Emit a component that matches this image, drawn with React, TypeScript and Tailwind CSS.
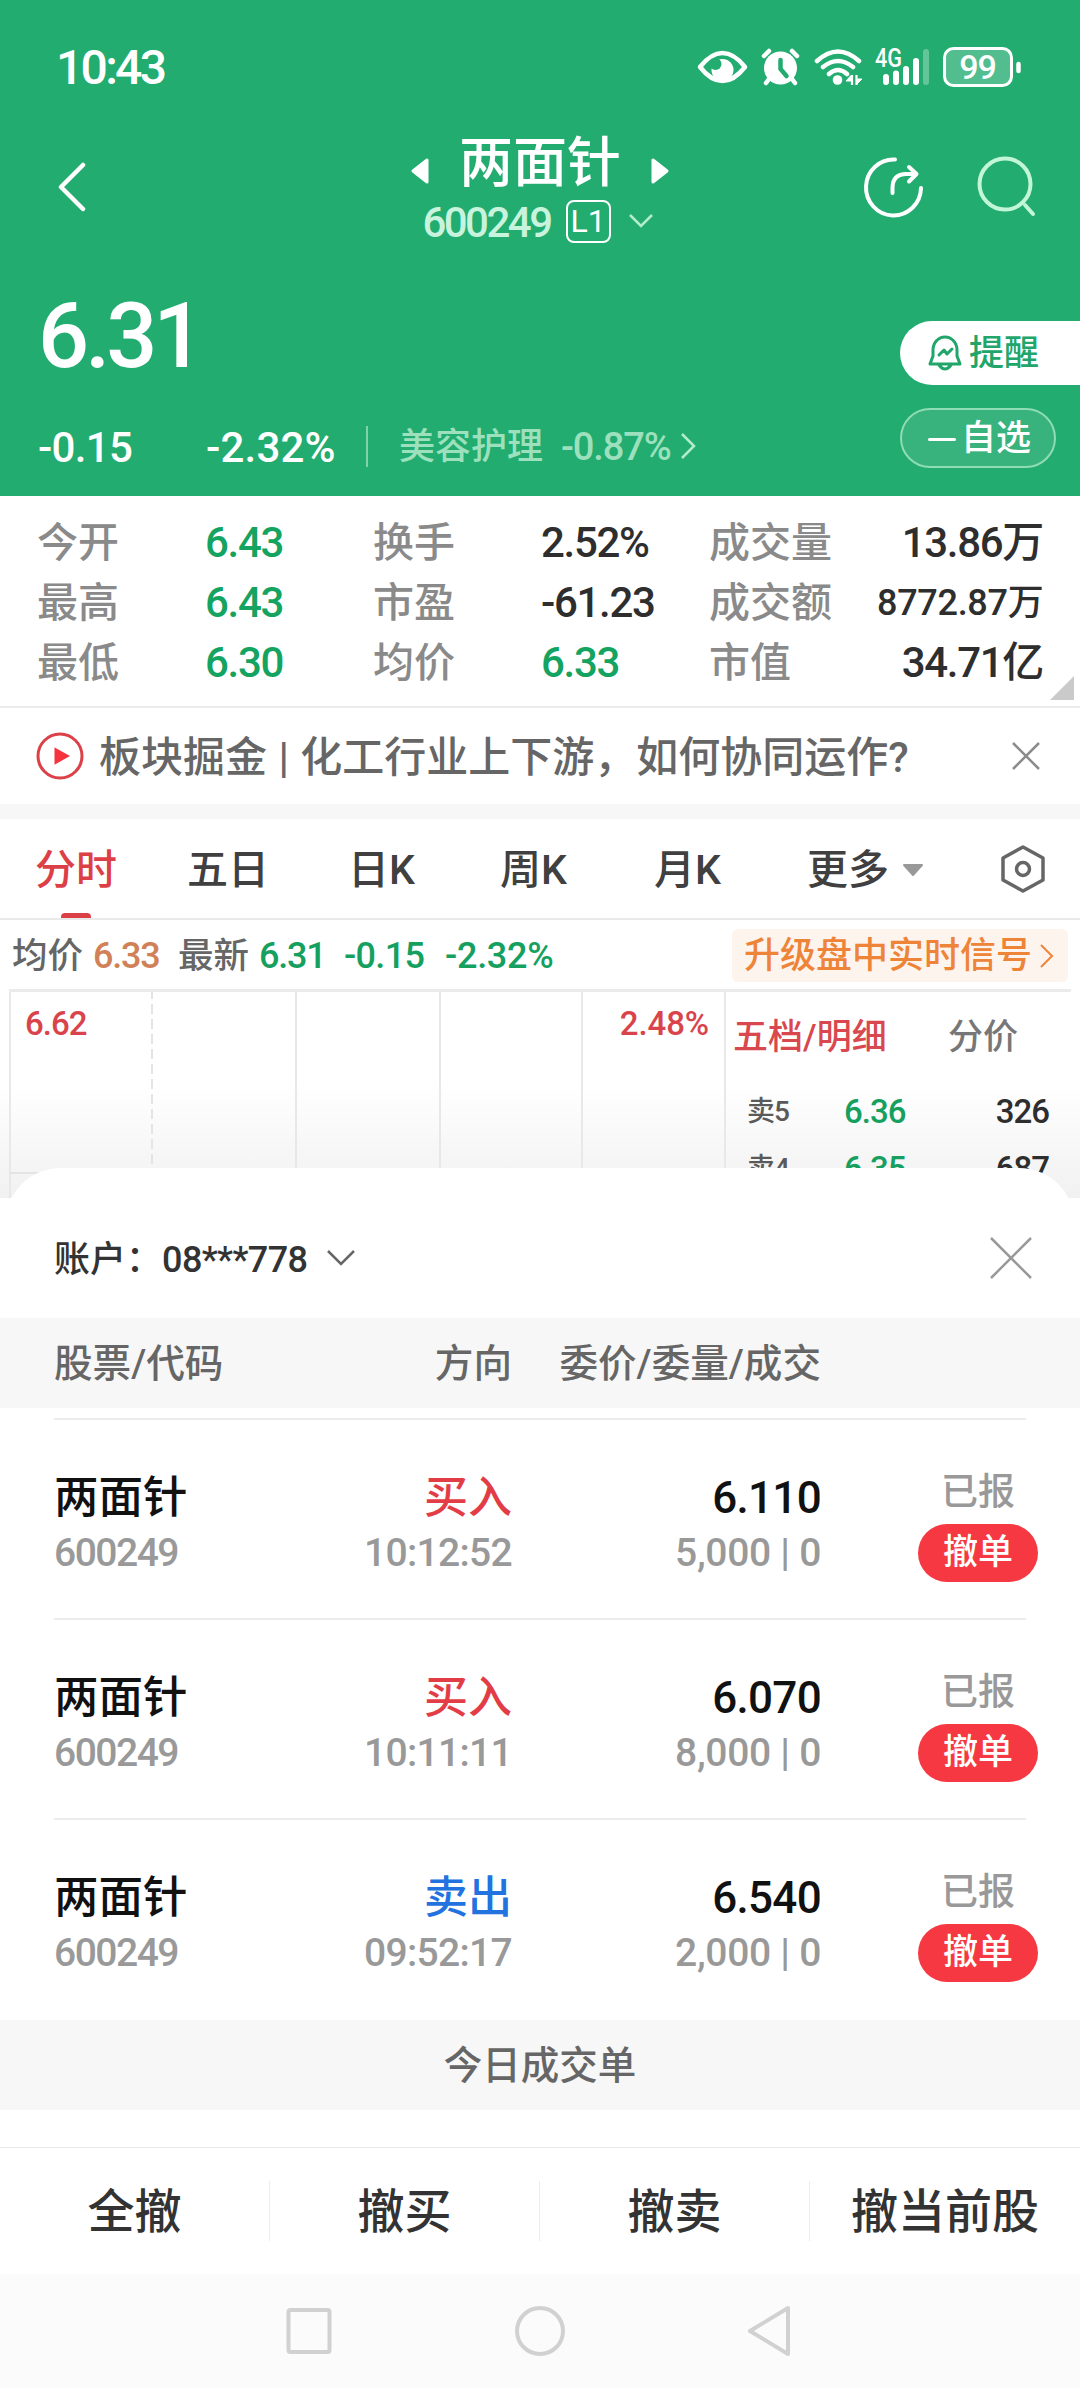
import React from 'react';

interface Stat {
  label: string;
  value: string;
  green?: boolean;
  small?: boolean;
}

interface Order {
  name: string;
  code: string;
  side: 'buy' | 'sell';
  time: string;
  price: string;
  amount: string;
}

const stats: Stat[][] = [
  [
    { label: '今开', value: '6.43', green: true },
    { label: '换手', value: '2.52%' },
    { label: '成交量', value: '13.86万' },
  ],
  [
    { label: '最高', value: '6.43', green: true },
    { label: '市盈', value: '-61.23' },
    { label: '成交额', value: '8772.87万', small: true },
  ],
  [
    { label: '最低', value: '6.30', green: true },
    { label: '均价', value: '6.33', green: true },
    { label: '市值', value: '34.71亿' },
  ],
];

const orders: Order[] = [
  { name: '两面针', code: '600249', side: 'buy', time: '10:12:52', price: '6.110', amount: '5,000 | 0' },
  { name: '两面针', code: '600249', side: 'buy', time: '10:11:11', price: '6.070', amount: '8,000 | 0' },
  { name: '两面针', code: '600249', side: 'sell', time: '09:52:17', price: '6.540', amount: '2,000 | 0' },
];

const StatusBar: React.FC = () => (
  <div className="flex h-[134px] items-center pl-[56px] pr-[58px]">
    <span className="pt-[2px] text-[48px] leading-[48px] tracking-[-2.700px]">10:43</span>
    <svg className="ml-auto h-[48px] w-[326px]" viewBox="696 43 326 48" fill="none" stroke="#fff">
      {/* eye */}
      <path d="M700 67Q711 53 722.500 53Q734 53 745 67Q734 81 722.500 81Q711 81 700 67Z" strokeWidth="4.500" strokeLinejoin="round" />
      <circle cx="722.500" cy="70" r="11" fill="#fff" stroke="none" />
      <circle cx="715.500" cy="64" r="6" fill="#22ac70" stroke="none" />
      {/* alarm */}
      <g strokeLinecap="round">
        <circle cx="780.500" cy="68" r="16.500" fill="#fff" stroke="none" />
        <path d="M764 56l5-5M792 51l5 5M769 79l-3 4M792 79l3 4" strokeWidth="4.500" />
        <path d="M780.500 60v9l6 7" stroke="#22ac70" strokeWidth="4.500" />
      </g>
      {/* wifi */}
      <g strokeLinecap="round" strokeWidth="4.500">
        <path d="M817 61q21-19 42 0M823 67q15-12 30 0M829 74q9-8 18 0" />
        <circle cx="837.500" cy="80" r="4.800" fill="#fff" stroke="none" />
      </g>
      <path d="M852 75v10M856.500 75v10" strokeWidth="2.200" />
      <path d="M846 81l5-5.500v5.500zM862 79l-5 5v-5z" fill="#fff" strokeWidth="1" />
      {/* signal */}
      <text x="875" y="67" fill="#fff" stroke="none" fontSize="25" textLength="27" lengthAdjust="spacingAndGlyphs">4G</text>
      <g strokeLinecap="round" strokeWidth="6">
        <path d="M886 77v5M896 73.500v8.500M906 69v13M916 61v21" />
        <path d="M926 52v30" opacity=".3" />
      </g>
      {/* battery */}
      <rect x="944.500" y="48.500" width="67" height="37" rx="9" fill="#ffffff38" strokeWidth="3" />
      <path d="M1018.500 64v7" strokeWidth="4.500" strokeLinecap="round" />
      <text x="977.500" y="79" fill="#fff" stroke="none" fontSize="34" textAnchor="middle" letterSpacing="-1">99</text>
    </svg>
  </div>
);

const TitleBar: React.FC = () => (
  <div className="flex h-[122px] justify-between pl-[56px] pr-[44px]">
    <svg className="mt-[28px] h-[50px] w-[32px]" viewBox="0 0 32 50" fill="none" stroke="#fff" strokeWidth="4.500" strokeLinecap="round" strokeLinejoin="round">
      <path d="M27 3L5 25L27 47" />
    </svg>
    <div className="ml-[130px] flex w-[262px] flex-col items-center">
      <div className="flex h-[60px] items-center">
        <svg className="mt-[13px] h-[28px] w-[20px]" viewBox="0 0 20 28" fill="#fff" stroke="#fff" strokeWidth="3" strokeLinejoin="round">
          <path d="M3 14L17 3V25Z" />
        </svg>
        <h1 className="mx-[29px] text-[54px] leading-[60px]">两面针</h1>
        <svg className="mt-[13px] h-[28px] w-[20px]" viewBox="0 0 20 28" fill="#fff" stroke="#fff" strokeWidth="3" strokeLinejoin="round">
          <path d="M17 14L3 3V25Z" />
        </svg>
      </div>
      <div className="mt-[5px] flex h-[44px] items-center pr-[4px]">
        <span className="pt-[3px] text-[42px] leading-[44px] tracking-[-2.500px] text-[#c8f3dc]">600249</span>
        <span className="ml-[15px] flex h-[43px] w-[45px] items-center justify-center rounded-[8px] border-2 border-white text-[32px] font-normal leading-[38px]">L1</span>
        <svg className="ml-[17px] h-[16px] w-[26px]" viewBox="0 0 26 16" fill="none" stroke="#b5ebce" strokeWidth="2.500">
          <path d="M2 2L13 13L24 2" />
        </svg>
      </div>
    </div>
    <svg className="mt-[19px] h-[66px] w-[174px]" viewBox="862 154 174 66" fill="none" strokeWidth="4" strokeLinecap="round">
      <g stroke="#fff">
        <path d="M895 160.500A27.500 28 0 1 0 921 189" />
        <path d="M892.500 194v-5q0-14 14-14h10M909 168l7.500 7l-7.500 7.500" strokeLinejoin="round" />
      </g>
      <g stroke="#c3f5d9">
        <circle cx="1005" cy="185" r="25.500" />
        <path d="M1025 206l8 9" />
      </g>
    </svg>
  </div>
);

const Quote: React.FC = () => (
  <div className="flex h-[240px] justify-between pl-[38px]">
    <div>
      <div className="mt-[35px] text-[90px] leading-[92px] tracking-[-4px]">6.31</div>
      <div className="mt-[41px] flex h-[44px] items-center">
        <span className="w-[168px] pt-[3px] text-[42px] leading-[44px] tracking-[-0.700px]">-0.15</span>
        <span className="w-[160px] pt-[3px] text-[42px] leading-[44px] tracking-[0.200px]">-2.32%</span>
        <i className="h-[41px] w-[2px] bg-[#7fd3a8]" />
        <span className="ml-[31px] pt-[1px] text-[36px] leading-[44px] text-[#9ce0bd]">美容护理</span>
        <span className="ml-[18px] pt-[2px] text-[38px] leading-[44px] tracking-[-1.100px] text-[#9ce0bd]">-0.87%</span>
        <svg className="ml-[9px] h-[28px] w-[16px]" viewBox="0 0 16 28" fill="none" stroke="#b5ebce" strokeWidth="2.500">
          <path d="M2 2L14 14L2 26" />
        </svg>
      </div>
    </div>
    <div className="w-[180px] pt-[65px]">
      <div className="flex h-[64px] items-center rounded-l-full bg-white pl-[28px] text-[#22a56b]">
        <svg className="h-[36px] w-[34px]" viewBox="0 0 34 36" fill="none" stroke="currentColor" strokeWidth="3" strokeLinecap="round" strokeLinejoin="round">
          <path d="M5 21V15a12 13 0 0 1 24 0v6l3 8H2zM11 30q6 8 12 0" />
          <path d="M11 20l5-5l3 4l5-5" />
        </svg>
        <span className="ml-[7px] pt-[2px] text-[35px] leading-[50px]">提醒</span>
      </div>
      <div className="mt-[23px] flex h-[60px] w-[156px] items-center rounded-full border-2 border-[#8fdcb5] bg-[#38b37e] pl-[26px]">
        <i className="mt-[2px] h-[3px] w-[28px] rounded bg-white" />
        <span className="ml-[5px] pt-[1px] text-[35px] leading-[50px]">自选</span>
      </div>
    </div>
  </div>
);

const StatGrid: React.FC = () => (
  <div className="relative h-[212px] border-b-2 border-[#ebebeb] pl-[37px] pt-[17px]">
    {stats.map((row, i) => (
      <div key={i} className="grid h-[60px] w-[1006px] grid-cols-[336px_336px_334px] text-[42px] leading-[60px]">
        {row.map((item, col) => (
          <div key={item.label} className="flex">
            <span className="w-[168px] shrink-0 text-[41px] text-[#8a8a8a]">{item.label}</span>
            <span
              className={`whitespace-nowrap ${item.green ? 'text-[#14a360]' : 'text-[#2e2e2e]'} ${
                item.small ? 'text-[36px] tracking-[-0.300px]' : 'tracking-[-1.300px]'
              } ${col === 2 ? 'ml-auto' : ''}`}
            >
              {item.value}
            </span>
          </div>
        ))}
      </div>
    ))}
    <svg className="absolute bottom-[6px] right-[6px] h-[24px] w-[24px]" viewBox="0 0 24 24" fill="#cacaca">
      <path d="M24 0V24H0Z" />
    </svg>
  </div>
);

const NewsBar: React.FC = () => (
  <div className="flex h-[111px] items-center border-b-[15px] border-[#f7f7f7] pl-[36px] pr-[40px]">
    <svg className="h-[48px] w-[48px]" viewBox="0 0 48 48" fill="none" stroke="#dc4149" strokeWidth="3">
      <circle cx="24" cy="24" r="22" />
      <path d="M19.500 17L32 24L19.500 31Z" fill="#f5343f" stroke="#f5343f" strokeWidth="2" />
    </svg>
    <span className="ml-[15px] pt-[4px] text-[42px] leading-[60px] [word-spacing:1px] text-[#666]">板块掘金 | 化工行业上下游，如何协同运作?</span>
    <svg className="ml-auto h-[28px] w-[28px]" viewBox="0 0 28 28" stroke="#8c8c8c" strokeWidth="2.500">
      <path d="M1 1L27 27M27 1L1 27" />
    </svg>
  </div>
);

const Tabs: React.FC = () => (
  <div className="flex h-[101px] items-center border-b-2 border-[#e9e9e9] pl-[35px] pr-[34px] pt-[3px] text-[41px] leading-[60px] text-[#404040]">
    <div className="relative flex h-full w-[152px] items-center text-[#dd3f47]">
      分时
      <i className="absolute bottom-0 left-[26px] h-[5px] w-[30px] rounded-t bg-[#dd3f47]" />
    </div>
    <span className="w-[161px]">五日</span>
    <span className="w-[152px]">日K</span>
    <span className="w-[154px]">周K</span>
    <span className="w-[153px]">月K</span>
    <span>更多</span>
    <svg className="ml-[13px] h-[14px] w-[22px]" viewBox="0 0 22 14" fill="#999" stroke="#999" strokeWidth="2" strokeLinejoin="round">
      <path d="M2 2H20L11 12Z" />
    </svg>
    <svg className="-mt-[3px] ml-auto h-[48px] w-[46px]" viewBox="0 0 46 48" fill="none" stroke="#666" strokeWidth="3.500" strokeLinejoin="round">
      <path d="M23 2L43 13V35L23 46L3 35V13Z" />
      <circle cx="23" cy="24" r="6.500" />
    </svg>
  </div>
);

const PriceLine: React.FC = () => (
  <div className="flex h-[69px] items-center pl-[12px] pr-[12px] pt-[2px] text-[36px] leading-[50px] text-[#16a05f]">
    <span className="text-[35.500px] text-[#666]">均价</span>
    <span className="ml-[10px] w-[85px] tracking-[-1.200px] text-[#d08157]">6.33</span>
    <span className="text-[35.500px] text-[#666]">最新</span>
    <span className="ml-[10px] w-[85px] tracking-[-1.200px]">6.31</span>
    <span className="w-[101px] tracking-[-0.700px]">-0.15</span>
    <span className="tracking-[-0.300px]">-2.32%</span>
    <div className="ml-auto flex h-[53px] w-[336px] items-center rounded-[6px] bg-[#fef4ee] pl-[12px] text-[#ee8437]">
      升级盘中实时信号
      <svg className="ml-[8px] h-[24px] w-[14px]" viewBox="0 0 14 24" fill="none" stroke="#ee8437" strokeWidth="2">
        <path d="M1 1L12 12L1 23" />
      </svg>
    </div>
  </div>
);

const asks = [
  { label: '卖5', price: '6.36', count: '326' },
  { label: '卖4', price: '6.35', count: '687' },
];

const Chart: React.FC = () => (
  <div className="relative h-[209px] overflow-hidden bg-linear-to-b from-white from-45% to-[#f1f1f1]">
    <div className="ml-[9px] mr-[9px] flex h-[209px] border-t-[3px] border-[#ebebeb]">
      <div className="flex w-[717px] border-l-2 border-r-2 border-[#e8e8e8] text-[33px] leading-[40px] tracking-[-1px] text-[#d9444c]">
        <div className="relative w-[142px] pl-[14px] pt-[12px]">
          6.62
          <svg className="absolute right-0 top-0 h-[206px] w-[2px]" viewBox="0 0 2 206" stroke="#e4e4e4" strokeWidth="2">
            <path d="M1 0V206" strokeDasharray="10 5" strokeDashoffset="3" />
          </svg>
        </div>
        <div className="w-[144px] border-r-2 border-[#e8e8e8]" />
        <div className="w-[144px] border-r-2 border-[#e8e8e8]" />
        <div className="w-[142px] border-r-2 border-[#e8e8e8]" />
        <div className="flex-1 pr-[15px] pt-[12px] text-right tracking-[-0.100px]">2.48%</div>
      </div>
      <div className="flex-1 pl-[7px]">
        <div className="flex h-[90px] items-center pt-[2px] text-[35px] leading-[50px]">
          <span className="w-[215px] text-[#d8484e]">五档/明细</span>
          <span className="text-[#777]">分价</span>
        </div>
        {asks.map((ask) => (
          <div key={ask.label} className="flex h-[57px] items-center pl-[14px] pr-[22px] pt-[2px] text-[33px] leading-[57px] tracking-[-1px]">
            <span className="w-[97px] text-[28px] text-[#5a5a5a]">{ask.label}</span>
            <span className="text-[#16a05f]">{ask.price}</span>
            <span className="ml-auto text-[#2e2e2e]">{ask.count}</span>
          </div>
        ))}
      </div>
    </div>
    <i className="absolute left-[9px] top-[183px] h-[2px] w-[60px] bg-[#e4e4e4]" />
    {/* rounded top edge of the order sheet */}
    <div className="absolute bottom-0 left-[5px] right-[5px] h-[30px] overflow-hidden">
      <div className="h-[120px] rounded-t-[56px] bg-white" />
    </div>
  </div>
);

const OrderRow: React.FC<{ order: Order; last: boolean }> = ({ order, last }) => (
  <div className={`mx-[54px] grid h-[200px] grid-cols-[200px_258px_309px_1fr] pt-[48px] ${last ? '' : 'border-b-2 border-[#ededed]'}`}>
    <div>
      <div className="text-[44.500px] leading-[60px] text-[#111]">{order.name}</div>
      <div className="text-[39px] leading-[50px] tracking-[-1.500px] text-[#999]">{order.code}</div>
    </div>
    <div className="text-right">
      <div className={`text-[44px] leading-[60px] ${order.side === 'buy' ? 'text-[#e23d46]' : 'text-[#2272e0]'}`}>
        {order.side === 'buy' ? '买入' : '卖出'}
      </div>
      <div className="text-[39px] leading-[50px] tracking-[-0.700px] text-[#999]">{order.time}</div>
    </div>
    <div className="text-right">
      <div className="text-[44px] leading-[60px] tracking-[-0.700px] text-[#111]">{order.price}</div>
      <div className="text-[39px] leading-[50px] tracking-[-0.300px] text-[#999]">{order.amount}</div>
    </div>
    <div className="-mr-[12px] flex flex-col items-end">
      <div className="w-[120px] text-center text-[37px] leading-[50px] text-[#999]">已报</div>
      <button className="mt-[6px] h-[58px] w-[120px] rounded-full bg-[#f53841] text-[35px] leading-[58px] text-white">撤单</button>
    </div>
  </div>
);

const OrderSheet: React.FC = () => (
  <div className="bg-white">
    <div className="flex h-[120px] items-center pl-[54px] pr-[48px] text-[36px] leading-[50px] text-[#333]">
      <span className="pt-[3px]">账户：</span>
      <span className="pt-[3px] tracking-[-0.600px]">08***778</span>
      <svg className="ml-[20px] h-[16px] w-[28px]" viewBox="0 0 28 16" fill="none" stroke="#666" strokeWidth="2.500">
        <path d="M1 1L14 14L27 1" />
      </svg>
      <svg className="ml-auto h-[42px] w-[42px]" viewBox="0 0 42 42" stroke="#999" strokeWidth="2.500">
        <path d="M1 1L41 41M41 1L1 41" />
      </svg>
    </div>
    <div className="grid h-[90px] grid-cols-[200px_258px_309px] items-center bg-[#f7f7f7] pl-[54px] pt-[2px] text-[38.600px] leading-[50px] text-[#666]">
      <span>股票/代码</span>
      <span className="text-right">方向</span>
      <span className="text-right">委价/委量/成交</span>
    </div>
    <div className="mx-[54px] mt-[10px] h-[2px] bg-[#ededed]" />
    {orders.map((order, i) => (
      <OrderRow key={order.time} order={order} last={i === orders.length - 1} />
    ))}
    <div className="flex h-[90px] items-center justify-center bg-[#f7f7f7] pt-[2px] text-[38.500px] leading-[50px] text-[#666]">今日成交单</div>
  </div>
);

const ActionBar: React.FC = () => (
  <div className="mt-[37px] flex h-[127px] items-center border-t border-[#e8e8e8] text-[47px] leading-[62px] text-[#333]">
    {['全撤', '撤买', '撤卖', '撤当前股'].map((label, i) => (
      <button key={label} className={`h-[60px] w-[270px] whitespace-nowrap ${i < 3 ? 'border-r border-[#ededed]' : ''}`}>
        {label}
      </button>
    ))}
  </div>
);

const NavBar: React.FC = () => (
  <div className="h-[114px] bg-[#fbfbfb]">
    <svg className="h-[114px] w-[1080px]" viewBox="0 2274 1080 114" fill="none" stroke="#d1d1d1" strokeWidth="4" strokeLinejoin="round">
      <rect x="288.500" y="2310" width="41" height="42" rx="2" />
      <circle cx="540" cy="2331" r="23" />
      <path d="M788 2308V2354L750 2331Z" />
    </svg>
  </div>
);

const App: React.FC = () => (
  <div className="h-[2388px] w-[1080px] overflow-hidden bg-white font-[Roboto,'Noto_Sans_CJK_SC',sans-serif] [font-weight:500]">
    <header className="bg-[#22ac70] text-white">
      <StatusBar />
      <TitleBar />
      <Quote />
    </header>
    <StatGrid />
    <NewsBar />
    <Tabs />
    <PriceLine />
    <Chart />
    <OrderSheet />
    <ActionBar />
    <NavBar />
  </div>
);

export default App;
